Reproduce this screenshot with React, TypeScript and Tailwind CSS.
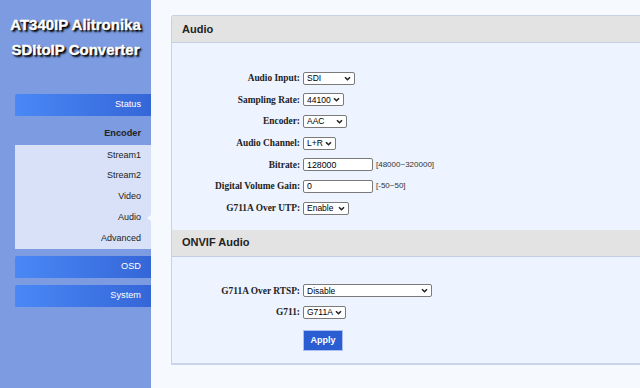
import React from 'react';

const sans = 'font-["Liberation_Sans",Arial,sans-serif]';
const serif = 'font-["Liberation_Serif","Times_New_Roman",serif]';

const subItems = ['Stream1', 'Stream2', 'Video', 'Audio', 'Advanced'];

function Chevron() {
  return (
    <svg width="7" height="5" viewBox="0 0 7 5" className="shrink-0 mr-[3px]">
      <path d="M1 1.2l2.5 2.5 2.5-2.5" fill="none" stroke="#222" strokeWidth="1.6" />
    </svg>
  );
}

function Select({ value, options, width }: { value: string; options: string[]; width: string }) {
  return (
    <div className={`flex items-center h-[13px] bg-white border border-[#7a7a7a] rounded-[2px] ${width}`}>
      <select
        defaultValue={value}
        className={`appearance-none bg-transparent flex-1 min-w-0 h-full pl-[3px] text-[8.5px] leading-[10px] text-black outline-none ${sans}`}
      >
        {options.map((o) => (
          <option key={o}>{o}</option>
        ))}
      </select>
      <Chevron />
    </div>
  );
}

function TextInput({ value }: { value: string }) {
  return (
    <input
      defaultValue={value}
      className={`w-[70px] h-[13px] bg-white border border-[#7a7a7a] rounded-[2px] pl-[3px] text-[8.8px] leading-[10px] text-black outline-none ${sans}`}
    />
  );
}

function Row({ label, children }: { label: string; children: React.ReactNode }) {
  return (
    <div className="flex items-center h-[13px]">
      <label className={`w-[128px] text-right text-[9.4px] font-bold text-[#222] ${serif}`}>{label}</label>
      <div className="ml-[3px] flex items-center">{children}</div>
    </div>
  );
}

function SectionHeader({ title }: { title: string }) {
  return (
    <div className="h-[27px] flex items-center pl-[10px] bg-[#e3e3e3] border-b border-[#c4cee2]">
      <h2 className={`text-[11px] font-bold text-[#222] ${sans}`}>{title}</h2>
    </div>
  );
}

function NavButton({ label }: { label: string }) {
  return (
    <div
      className={`ml-[15px] h-[22px] flex items-center justify-end pr-[10px] rounded-tl-[2px] bg-gradient-to-r from-[#4a88f6] to-[#3566d8] text-white text-[9.2px] ${sans}`}
    >
      {label}
    </div>
  );
}

export default function App() {
  return (
    <div className={`flex w-[640px] h-[388px] overflow-hidden bg-[#f6faff] ${sans}`}>
      {/* Sidebar */}
      <aside className="w-[151px] shrink-0 bg-[#7c9be0] flex flex-col">
        <div className="pt-[12px] text-center text-white font-bold text-[15px] leading-[25px] [-webkit-text-stroke:0.4px_#fff] [text-shadow:2px_2px_2px_#000,1px_1px_1px_#000]">
          <div>AT340IP Alitronika</div>
          <div>SDItoIP Converter</div>
        </div>

        <div className="mt-[32px]">
          <NavButton label="Status" />
        </div>

        <div className="mt-[7px] ml-[15px] h-[22px] flex items-center justify-end pr-[10px] text-[9.2px] font-bold text-[#222]">
          Encoder
        </div>
        <ul className="ml-[15px] bg-[#d9e1f8]">
          {subItems.map((item) =>
            item === 'Audio' ? (
              <li key={item} className="h-[20.8px] flex items-center justify-end text-[9px] text-[#222]">
                <span>{item}</span>
                <span className="ml-[6px] w-0 h-0 border-y-[3px] border-y-transparent border-r-[4px] border-r-[#f6faff]" />
              </li>
            ) : (
              <li key={item} className="h-[20.8px] flex items-center justify-end pr-[10px] text-[9px] text-[#222]">
                {item}
              </li>
            )
          )}
        </ul>

        <div className="mt-[7px]">
          <NavButton label="OSD" />
        </div>
        <div className="mt-[7px]">
          <NavButton label="System" />
        </div>
      </aside>

      {/* Main content */}
      <main className="flex-1 pt-[15px] pl-[20px]">
        <div className="w-[500px] border border-[#c8d1e4] border-b-2 border-b-[#c9d5ea] rounded-tl-[3px] bg-[#edf3ff] overflow-hidden">
          <SectionHeader title="Audio" />
          <div className="pt-[28.5px] pb-[15px] flex flex-col gap-[8.7px]">
            <Row label="Audio Input:">
              <Select value="SDI" options={['SDI', 'Analog']} width="w-[52px]" />
            </Row>
            <Row label="Sampling Rate:">
              <Select value="44100" options={['44100', '48000']} width="w-[41px]" />
            </Row>
            <Row label="Encoder:">
              <Select value="AAC" options={['AAC', 'G711']} width="w-[44px]" />
            </Row>
            <Row label="Audio Channel:">
              <Select value="L+R" options={['L+R', 'L', 'R']} width="w-[33px]" />
            </Row>
            <Row label="Bitrate:">
              <TextInput value="128000" />
              <span className="ml-[3px] text-[8px] text-[#333]">[48000~320000]</span>
            </Row>
            <Row label="Digital Volume Gain:">
              <TextInput value="0" />
              <span className="ml-[3px] text-[8px] text-[#333]">[-50~50]</span>
            </Row>
            <Row label="G711A Over UTP:">
              <Select value="Enable" options={['Enable', 'Disable']} width="w-[46px]" />
            </Row>
          </div>

          <SectionHeader title="ONVIF Audio" />
          <div className="pt-[27.5px] pb-[12px] flex flex-col">
            <Row label="G711A Over RTSP:">
              <Select value="Disable" options={['Disable', 'Enable']} width="w-[129px]" />
            </Row>
            <div className="mt-[8.5px]">
              <Row label="G711:">
                <Select value="G711A" options={['G711A', 'G711U']} width="w-[43px]" />
              </Row>
            </div>
            <div className="mt-[7.5px] pl-[131px]">
              <button className="w-[40px] h-[21px] bg-[#2b5dd2] border border-[#a8bff0] text-white text-[9px] font-bold">
                Apply
              </button>
            </div>
          </div>
        </div>
      </main>
    </div>
  );
}
